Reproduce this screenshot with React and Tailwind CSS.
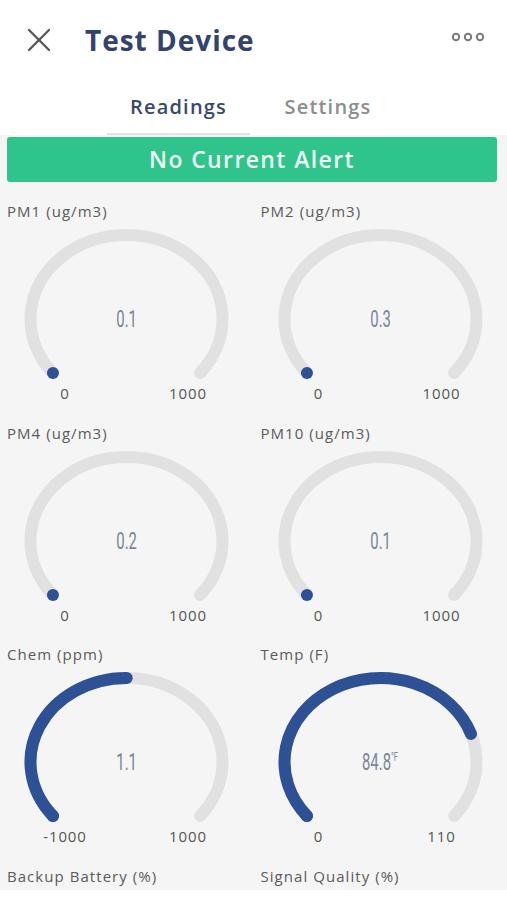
import { X } from 'lucide-react'

const gauges = [
  { label: 'PM1 (ug/m3)', value: 0.1, min: 0, max: 1000 },
  { label: 'PM2 (ug/m3)', value: 0.3, min: 0, max: 1000 },
  { label: 'PM4 (ug/m3)', value: 0.2, min: 0, max: 1000 },
  { label: 'PM10 (ug/m3)', value: 0.1, min: 0, max: 1000 },
  { label: 'Chem (ppm)', value: 1.1, min: -1000, max: 1000 },
  { label: 'Temp (F)', value: 84.8, min: 0, max: 110, unit: '°F' },
]

// arc geometry, in px of the svg box
const CX = 126.5
const CY = 98
const RX = 96
const RY = 84
const SWEEP = 260

function point(deg) {
  const r = (deg * Math.PI) / 180
  return [CX + RX * Math.sin(r), CY - RY * Math.cos(r)]
}

function arcPath(from, to) {
  const [x1, y1] = point(from)
  const [x2, y2] = point(to)
  const large = to - from > 180 ? 1 : 0
  return `M ${x1} ${y1} A ${RX} ${RY} 0 ${large} 1 ${x2} ${y2}`
}

function Gauge({ label, value, min, max, unit }) {
  const f = Math.min(1, Math.max(0, (value - min) / (max - min)))
  const start = -SWEEP / 2
  const end = start + SWEEP * f
  const [sx, sy] = point(start)

  return (
    <div className="flex flex-col pb-[19.5px]">
      <div className="h-[20px] px-[7px] text-[15px] leading-[20px] tracking-[0.07em] text-[#5b5b5b]">
        {label}
      </div>
      <div className="relative h-[162px]">
        <svg width="253" height="162" className="block">
          <path d={arcPath(start, SWEEP / 2)} fill="none" stroke="#e1e1e1" strokeWidth="12" strokeLinecap="round" />
          {f > 0.01 && (
            <path d={arcPath(start, end)} fill="none" stroke="#2d5194" strokeWidth="12" strokeLinecap="round" />
          )}
          <circle cx={sx} cy={sy} r="6" fill="#2d5194" />
        </svg>
        <div className="absolute left-0 right-0 top-[98px] -translate-y-1/2 flex justify-center">
          <span className="inline-flex items-start font-['Roboto'] text-[24px] leading-[28px] text-[#7b8597] scale-x-[0.62]">
            {value}
            {unit && <span className="text-[12px] leading-[14px] mt-[2px]">{unit}</span>}
          </span>
        </div>
      </div>
      <div className="flex h-[20px] text-[15px] leading-[20px] tracking-[0.06em] text-[#555]">
        <span className="w-[130px] text-center">{min}</span>
        <span className="w-[116px] text-center">{max}</span>
      </div>
    </div>
  )
}

function MoreDots() {
  return (
    <svg width="34" height="10" viewBox="0 0 34 10">
      <circle cx="5" cy="5" r="3.2" fill="none" stroke="#7a7a7a" strokeWidth="2" />
      <circle cx="17" cy="5" r="3.2" fill="none" stroke="#7a7a7a" strokeWidth="2" />
      <circle cx="29" cy="5" r="3.2" fill="none" stroke="#7a7a7a" strokeWidth="2" />
    </svg>
  )
}

export default function App() {
  return (
    <div className="min-h-screen bg-white font-['Open_Sans',sans-serif]">

      {/* ── Header ── */}
      <header className="flex items-center h-[80px] pl-[19px] pr-[22px]">
        <X className="w-[40px] h-[40px] text-[#555]" strokeWidth={1.4} />
        <h1 className="ml-[26px] text-[28px] font-bold tracking-[0.035em] text-[#34436e]">
          Test Device
        </h1>
        <div className="ml-auto mb-[6px]">
          <MoreDots />
        </div>
      </header>

      {/* ── Tabs ── */}
      <nav className="flex pl-[107px] h-[55px]">
        <div className="w-[143px] pt-[13px] border-b-2 border-[#e2e2e2] text-center text-[20px] leading-[28px] font-semibold tracking-[0.06em] text-[#3a4870]">
          Readings
        </div>
        <div className="w-[156px] pt-[13px] text-center text-[20px] leading-[28px] font-semibold tracking-[0.06em] text-[#8d8d8d]">
          Settings
        </div>
      </nav>

      {/* ── Readings ── */}
      <main className="bg-[#f5f5f5] pb-[4px]">
        <div className="pt-[2px] pl-[7px] pr-[10px]">
          <div className="h-[45px] rounded-[3px] bg-[#2ec48b] flex items-center justify-center text-[23px] font-semibold tracking-[0.06em] text-[#f0fbf5]">
            No Current Alert
          </div>
        </div>

        <div className="grid grid-cols-2 pt-[19px]">
          {gauges.map(g => (
            <Gauge key={g.label} {...g} />
          ))}
          <div className="h-[20px] px-[7px] text-[15px] leading-[20px] tracking-[0.07em] text-[#5b5b5b]">
            Backup Battery (%)
          </div>
          <div className="h-[20px] px-[7px] text-[15px] leading-[20px] tracking-[0.07em] text-[#5b5b5b]">
            Signal Quality (%)
          </div>
        </div>
      </main>
    </div>
  )
}
